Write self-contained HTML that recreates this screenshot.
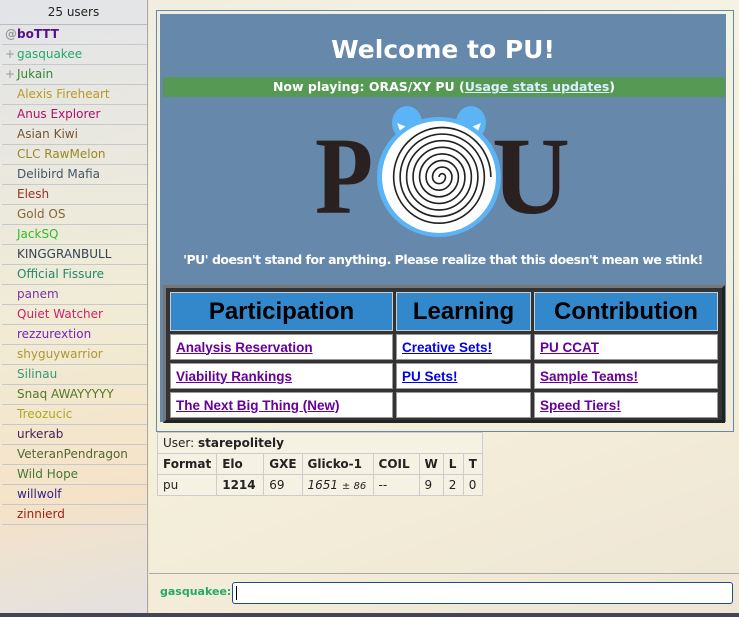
<!DOCTYPE html>
<html><head><meta charset="utf-8"><style>
*{margin:0;padding:0;box-sizing:border-box}
body{width:739px;height:617px;overflow:hidden;position:relative;font-family:"DejaVu Sans","Liberation Sans",sans-serif;font-size:12px;
background:linear-gradient(160deg,#e8e4d8 0%,#f3efd8 30%,#f4ecc8 55%,#efe0c0 75%,#e4d0b8 100%)}
#ul{position:absolute;left:0;top:0;width:148px;height:613px;border-right:1px solid #aaa;
background:linear-gradient(170deg,rgba(225,228,235,.85),rgba(240,235,215,.8) 50%,rgba(245,225,200,.8) 80%,rgba(225,225,230,.85));}
#ul .h{height:25px;line-height:24px;text-align:center;color:#222;border-bottom:1px solid #bbb}
#ul .r{height:20px;line-height:19px;border-bottom:1px solid #c8c8c8;padding-left:15px;position:relative;white-space:nowrap;margin-left:2px}
#ul .r i{position:absolute;left:3px;font-style:normal;color:#999}
#main{position:absolute;left:149px;top:0;width:590px;height:613px;background:rgba(245,243,232,.6)}
#box{position:absolute;left:7px;top:10px;width:578px;height:422px;border:1px solid #6688aa;padding:3px}
#blue{position:absolute;left:3px;top:3px;right:7px;bottom:9px;background:#6688aa}
h1{position:absolute;left:0;right:0;top:21px;text-align:center;color:#fff;font-size:25px;font-weight:bold}
#green{position:absolute;left:3px;right:1px;top:63px;height:20px;background:#559955;color:#fff;font-weight:bold;font-size:12.5px;text-align:center;line-height:19px}
#green u{color:#ddeeff}
#tag{position:absolute;left:0;right:0;top:238px;text-align:center;color:#fff;font-weight:bold;font-size:12.5px;white-space:nowrap;letter-spacing:-.5px}
#tbl{position:absolute;left:3px;top:271px;width:562px;height:138px;border:3px solid;border-color:#777 #222 #222 #777;background:#333;padding:1px}
table.t{border-collapse:separate;border-spacing:3px;width:100%;font-family:"Liberation Sans",sans-serif}
table.t th{background:#3388cc;color:#000;font-size:24px;height:39px;border:1px solid #ccc}
table.t td{background:#fff;height:26px;padding-left:5px;font-weight:bold;font-size:13.5px;border:1px solid #999}
table.t a{color:#660099;text-decoration:underline}
table.t a.b{color:#0000ee}
#st{position:absolute;left:8px;top:432px;border-collapse:collapse;background:rgba(245,242,230,.8);color:#222}
#st td{border:1px solid #ccc;padding:0 5px;height:21px;white-space:nowrap}
#bot{position:absolute;left:0;top:573px;width:590px;height:40px;border-top:1px solid #aaa}
#bot b{position:absolute;left:11px;top:11px;color:#22aa66;font-size:11px}
#inp{position:absolute;left:83px;top:8px;width:501px;height:22px;background:#fff;border:1px solid #1a4f88;border-radius:3px}
#inp:after{content:"";position:absolute;left:3px;top:3px;width:1px;height:14px;background:#000}
#dark{position:absolute;left:0;top:613px;width:739px;height:4px;background:#444455}
</style></head><body>
<div id="ul">
<div class="h">25 users</div>
<div class="r" style="color:#551188;font-weight:bold"><i>@</i>boTTT</div>
<div class="r" style="color:#22aa66"><i>+</i>gasquakee</div>
<div class="r" style="color:#338833"><i>+</i>Jukain</div>
<div class="r" style="color:#bb9922">Alexis Fireheart</div>
<div class="r" style="color:#aa1166">Anus Explorer</div>
<div class="r" style="color:#775533">Asian Kiwi</div>
<div class="r" style="color:#998822">CLC RawMelon</div>
<div class="r" style="color:#445566">Delibird Mafia</div>
<div class="r" style="color:#993322">Elesh</div>
<div class="r" style="color:#886633">Gold OS</div>
<div class="r" style="color:#33bb22">JackSQ</div>
<div class="r" style="color:#334455">KINGGRANBULL</div>
<div class="r" style="color:#228866">Official Fissure</div>
<div class="r" style="color:#7733aa">panem</div>
<div class="r" style="color:#cc2266">Quiet Watcher</div>
<div class="r" style="color:#7722bb">rezzurextion</div>
<div class="r" style="color:#aa9933">shyguywarrior</div>
<div class="r" style="color:#339977">Silinau</div>
<div class="r" style="color:#557722">Snaq AWAYYYYY</div>
<div class="r" style="color:#aaaa22">Treozucic</div>
<div class="r" style="color:#442255">urkerab</div>
<div class="r" style="color:#556633">VeteranPendragon</div>
<div class="r" style="color:#447733">Wild Hope</div>
<div class="r" style="color:#332288">willwolf</div>
<div class="r" style="color:#992211">zinnierd</div>
</div>
<div id="main">
<div id="box"><div id="blue">
<h1>Welcome to PU!</h1>
<div id="green">Now playing: ORAS/XY PU (<u>Usage stats updates</u>)</div>
<svg style="position:absolute;left:0;top:80px" width="567" height="150" viewBox="0 0 567 150">
<text x="155" y="119" font-family="Liberation Serif,serif" font-weight="bold" font-size="110" fill="#2a2020" textLength="58" lengthAdjust="spacingAndGlyphs">P</text>
<text x="332" y="119" font-family="Liberation Serif,serif" font-weight="bold" font-size="110" fill="#2a2020" textLength="78" lengthAdjust="spacingAndGlyphs">U</text>
<g transform="translate(279,83)">
<ellipse cx="-32" cy="-54" rx="15" ry="17" fill="#5ab4f6"/>
<ellipse cx="32" cy="-54" rx="15" ry="17" fill="#5ab4f6"/>
<path d="M-42,-54 L-18,-44 L-36,-38 Z" fill="#fff"/>
<path d="M42,-54 L18,-44 L36,-38 Z" fill="#fff"/>
<ellipse cx="0" cy="0" rx="62" ry="60" fill="#5ab4f6"/>
<ellipse cx="0" cy="0" rx="57" ry="56" fill="#fff"/>
<path transform="scale(1.08,1.1)" d="M0,0 A3,3 0 0 1 6,0 A6,6 0 0 1 -6,0 A9,9 0 0 1 12,0 A12,12 0 0 1 -12,0 A15,15 0 0 1 18,0 A18,18 0 0 1 -18,0 A21,21 0 0 1 24,0 A24,24 0 0 1 -24,0 A27,27 0 0 1 30,0 A30,30 0 0 1 -30,0 A33,33 0 0 1 36,0 A36,36 0 0 1 -36,0 A39,39 0 0 1 42,0 A42,42 0 0 1 -42,0 A45,45 0 0 1 48,0" fill="none" stroke="#222" stroke-width="1.5"/>
</g>
</svg>
<div id="tag">'PU' doesn't stand for anything. Please realize that this doesn't mean we stink!</div>
<div id="tbl"><table class="t">
<tr><th style="width:223px">Participation</th><th style="width:135px">Learning</th><th>Contribution</th></tr>
<tr><td><a>Analysis Reservation</a></td><td><a class="b">Creative Sets!</a></td><td><a>PU CCAT</a></td></tr>
<tr><td><a>Viability Rankings</a></td><td><a class="b">PU Sets!</a></td><td><a>Sample Teams!</a></td></tr>
<tr><td><a>The Next Big Thing (New)</a></td><td></td><td><a>Speed Tiers!</a></td></tr>
</table></div>
</div></div>
<table id="st">
<tr><td colspan="8">User: <b>starepolitely</b></td></tr>
<tr style="font-weight:bold"><td style="width:58px">Format</td><td style="width:47px">Elo</td><td style="width:38px">GXE</td><td style="width:71px">Glicko-1</td><td style="width:46px">COIL</td><td style="width:24px">W</td><td style="width:20px">L</td><td style="width:18px">T</td></tr>
<tr><td>pu</td><td><b>1214</b></td><td>69</td><td><i>1651</i> <small>± <i>86</i></small></td><td>--</td><td>9</td><td>2</td><td>0</td></tr>
</table>
<div id="bot"><b>gasquakee:</b><div id="inp"></div></div>
</div>
<div id="dark"></div>
</body></html>
